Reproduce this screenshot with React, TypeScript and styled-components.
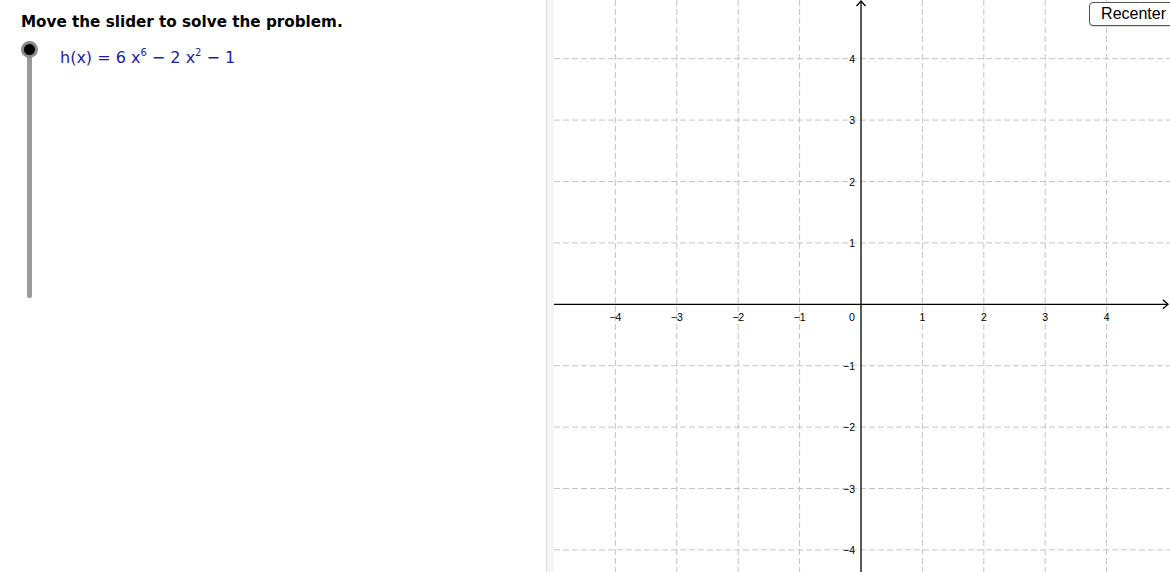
import React from 'react'
import styled, { createGlobalStyle } from 'styled-components'

const GlobalStyle = createGlobalStyle`
  html, body {
    margin: 0;
    padding: 0;
    background: #fff;
    overflow: hidden;
  }
  #root {
    height: 572px;
  }
`

const Page = styled.div`
  display: flex;
  width: 1170px;
  height: 572px;
  font-family: 'Liberation Sans', Arial, sans-serif;
`

const AlgebraPanel = styled.div`
  width: 546px;
  flex-shrink: 0;
  display: flex;
  flex-direction: column;
  padding: 11px 0 0 21px;
  box-sizing: border-box;
`

const Title = styled.h1`
  margin: 0;
  font-family: 'DejaVu Sans', Verdana, sans-serif;
  font-size: 15.2px;
  line-height: 22px;
  font-weight: bold;
  color: #000;
`

const SliderRow = styled.div`
  display: flex;
  gap: 23px;
  margin-top: 8px;
`

const Slider = styled.div`
  position: relative;
  width: 16px;
  height: 260px;
  display: flex;
  justify-content: center;
`

const Track = styled.div`
  margin-top: 8px;
  width: 5px;
  height: 249px;
  border-radius: 2px;
  background: #9a9a9a;
`

const Knob = styled.div`
  position: absolute;
  top: 0;
  left: 0;
  width: 17px;
  height: 17px;
  margin-left: -0.5px;
  box-sizing: border-box;
  border-radius: 50%;
  background: #000;
  border: 3px solid #8a8a8a;
`

const Formula = styled.div`
  font-family: 'DejaVu Sans', 'Liberation Sans', sans-serif;
  font-size: 16px;
  line-height: 20px;
  color: #1c1ca6;
  margin-top: 7px;
  white-space: nowrap;

  sup {
    font-size: 10px;
    vertical-align: 7px;
    line-height: 0;
  }
`

const Divider = styled.div`
  width: 8px;
  flex-shrink: 0;
  background: #f5f5f5;
  border-left: 1px solid #dcdcdc;
  box-sizing: border-box;
`

const GraphPanel = styled.div`
  position: relative;
  flex: 1;
  overflow: hidden;
`

const RecenterButton = styled.button`
  position: absolute;
  top: 2px;
  right: -10px;
  height: 24px;
  padding: 0 13px 0 11px;
  font-family: 'Liberation Sans', Arial, sans-serif;
  font-size: 16px;
  color: #000;
  background: #fff;
  border: 1px solid #555;
  border-radius: 4px;
  box-shadow: 0 1px 1px rgba(0, 0, 0, 0.15);
`

const W = 616
const H = 572
const OX = 307
const OY = 304.3
const U = 61.4
const ticks = [-4, -3, -2, -1, 1, 2, 3, 4]

const label = (n: number) => (n < 0 ? `\u2212${-n}` : `${n}`)

function Graph() {
  return (
    <svg width={W} height={H} viewBox={`0 0 ${W} ${H}`}>
      <g stroke="#c4c4c4" strokeWidth={1} strokeDasharray="6 3">
        {ticks.map((k) => (
          <line key={`v${k}`} x1={OX + k * U} y1={0} x2={OX + k * U} y2={H} />
        ))}
        {ticks.map((k) => (
          <line key={`h${k}`} x1={0} y1={OY - k * U} x2={W} y2={OY - k * U} />
        ))}
      </g>
      <g stroke="#000" strokeWidth={1.3} fill="none">
        <line x1={0} y1={OY} x2={W - 2} y2={OY} />
        <line x1={OX} y1={1} x2={OX} y2={H} />
        <polyline points={`${W - 7},${OY - 4.5} ${W - 2},${OY} ${W - 7},${OY + 4.5}`} />
        <polyline points={`${OX - 4.5},6 ${OX},1 ${OX + 4.5},6`} />
      </g>
      <g fontFamily="'Liberation Sans', Arial, sans-serif" fontSize={10.5} fill="#000">
        {ticks.map((k) => (
          <text key={`xl${k}`} x={OX + k * U} y={OY + 17} textAnchor="middle">
            {label(k)}
          </text>
        ))}
        <text x={OX - 9} y={OY + 17} textAnchor="middle">
          0
        </text>
        {ticks.map((k) => (
          <text key={`yl${k}`} x={OX - 6} y={OY - k * U + 4} textAnchor="end">
            {label(k)}
          </text>
        ))}
      </g>
    </svg>
  )
}

export default function App() {
  return (
    <>
      <GlobalStyle />
      <Page>
        <AlgebraPanel>
          <Title>Move the slider to solve the problem.</Title>
          <SliderRow>
            <Slider>
              <Track />
              <Knob />
            </Slider>
            <Formula>
              h(x) = 6 x<sup>6</sup> − 2 x<sup>2</sup> − 1
            </Formula>
          </SliderRow>
        </AlgebraPanel>
        <Divider />
        <GraphPanel>
          <Graph />
          <RecenterButton>Recenter</RecenterButton>
        </GraphPanel>
      </Page>
    </>
  )
}
